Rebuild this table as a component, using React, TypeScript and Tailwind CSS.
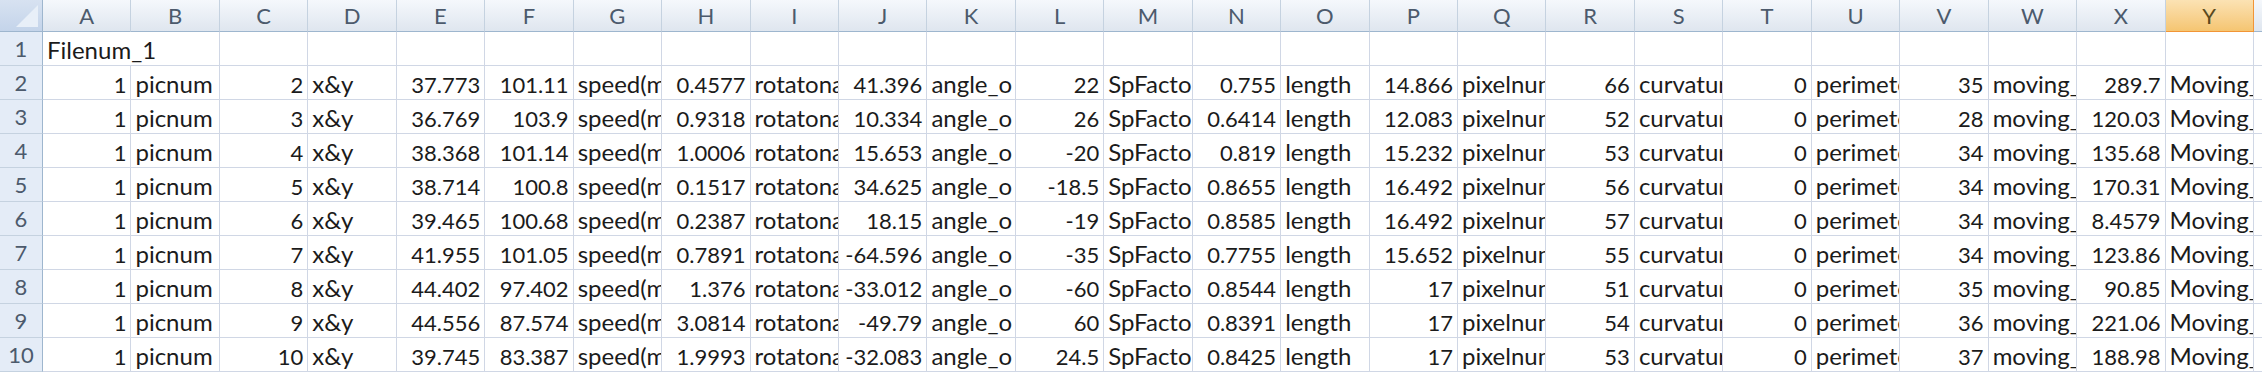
import React from "react";

const cols = "ABCDEFGHIJKLMNOPQRSTUVWXYZ".split("");

type Cell = string | number | null;

const T = {
  pic: "picnum",
  xy: "x&y",
  sp: "speed(mm/s)",
  rot: "rotatonal_speed",
  ang: "angle_o motion",
  spf: "SpFactor",
  len: "length",
  pix: "pixelnum",
  cur: "curvature",
  per: "perimeter",
  mov: "moving_dist",
  Mov: "Moving_speed",
};

const rowsRaw: string[][] = [
  ["2", "37.773", "101.11", "0.4577", "41.396", "22", "0.755", "14.866", "66", "35", "289.7"],
  ["3", "36.769", "103.9", "0.9318", "10.334", "26", "0.6414", "12.083", "52", "28", "120.03"],
  ["4", "38.368", "101.14", "1.0006", "15.653", "-20", "0.819", "15.232", "53", "34", "135.68"],
  ["5", "38.714", "100.8", "0.1517", "34.625", "-18.5", "0.8655", "16.492", "56", "34", "170.31"],
  ["6", "39.465", "100.68", "0.2387", "18.15", "-19", "0.8585", "16.492", "57", "34", "8.4579"],
  ["7", "41.955", "101.05", "0.7891", "-64.596", "-35", "0.7755", "15.652", "55", "34", "123.86"],
  ["8", "44.402", "97.402", "1.376", "-33.012", "-60", "0.8544", "17", "51", "35", "90.85"],
  ["9", "44.556", "87.574", "3.0814", "-49.79", "60", "0.8391", "17", "54", "36", "221.06"],
  ["10", "39.745", "83.387", "1.9993", "-32.083", "24.5", "0.8425", "17", "53", "37", "188.98"],
];

function buildRow(r: string[]): Cell[] {
  const [c, e, f, h, j, l, n, p, rr, v, x] = r;
  return [
    1, T.pic, c, T.xy, e, f, T.sp, h, T.rot, j, T.ang, l, T.spf, n, T.len, p, T.pix, rr, T.cur, 0, T.per, v, T.mov, x, T.Mov, null,
  ];
}

const isNum = (v: Cell) => v !== null && v !== "" && !isNaN(Number(v));

const font = { fontFamily: "Lato, 'Open Sans', sans-serif" };

function DataCell({ v }: { v: Cell }) {
  const num = isNum(v);
  return (
    <div
      className={`h-[34px] border-r border-b border-[#d0d7e5] overflow-hidden whitespace-nowrap flex items-end pb-[3px] leading-none text-[#1b1b1b] ${
        num ? "justify-end pr-[4px] text-[22px]" : "justify-start pl-[4px] text-[24px]"
      }`}
    >
      {v === null ? "" : String(v)}
    </div>
  );
}

export default function App() {
  const rows: Cell[][] = [
    ["Filenum_1", ...Array(25).fill(null)],
    ...rowsRaw.map(buildRow),
  ];
  return (
    <div className="w-[2262px] h-[372px] overflow-hidden bg-white" style={font}>
      <div className="grid grid-cols-[43px_repeat(26,88.44px)] grid-rows-[32px_repeat(10,34px)]">
        <div className="relative h-[32px] bg-gradient-to-b from-[#d7e2f1] to-[#c4d4ea] border-r border-b border-[#9eb6ce]">
          <div className="absolute right-[4px] bottom-[4px] w-0 h-0 border-l-[22px] border-l-transparent border-b-[22px] border-b-[#e8eff8]" />
        </div>
        {cols.map((c) => (
          <div
            key={c}
            className={`h-[32px] flex items-center justify-center text-[22px] border-b ${
              c === "Y"
                ? "bg-gradient-to-b from-[#fbe2b3] to-[#f5c571] border-r border-[#f29536] border-b-[#f29536] text-[#5a4a1e]"
                : "bg-gradient-to-b from-[#f5f8fc] to-[#dfe6ef] border-r border-r-[#c5d2e0] border-b-[#9eb6ce] text-[#4c5a6c]"
            }`}
          >
            {c}
          </div>
        ))}
        {rows.map((row, i) => (
          <React.Fragment key={i}>
            <div className="h-[34px] flex items-center justify-center text-[22px] bg-[#e4ecf7] border-r border-r-[#9eb6ce] border-b border-b-[#c5d2e0] text-[#4c5a6c]">
              {i + 1}
            </div>
            {i === 0 ? (
              <>
                <div className="col-span-2 h-[34px] border-r border-b border-[#d0d7e5] flex items-end pb-[3px] pl-[4px] text-[24px] leading-none text-[#1b1b1b] whitespace-nowrap">
                  Filenum_1
                </div>
                {Array.from({ length: 24 }).map((_, k) => (
                  <DataCell key={k} v={null} />
                ))}
              </>
            ) : (
              row.map((v, k) => <DataCell key={k} v={v} />)
            )}
          </React.Fragment>
        ))}
      </div>
    </div>
  );
}
